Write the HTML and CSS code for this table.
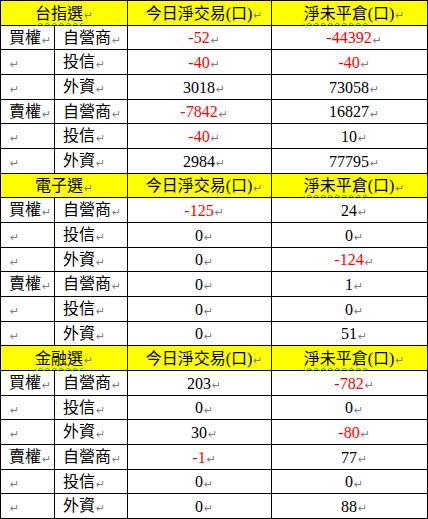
FILE: index.html
```html
<!DOCTYPE html>
<html lang="zh-Hant">
<head>
<meta charset="utf-8">
<title>選擇權三大法人</title>
<link rel="stylesheet" href="styles.css">
</head>
<body>
<div class="tbl">
  <div class="c hd span2"><span class="t"><span class="wavy">台指選</span></span><span class="pm">↵</span></div>
  <div class="c hd num"><span class="t">今日淨交易(口)</span><span class="pm z">↵</span></div>
  <div class="c hd num"><span class="t"><span class="wavy">淨未平倉</span>(口)</span><span class="pm z">↵</span></div>

  <div class="c lb">買權<span class="pm">↵</span></div><div class="c lb">自營商<span class="pm">↵</span></div>
  <div class="c num"><span class="t red">-52</span><span class="pm z">↵</span></div><div class="c num"><span class="t red">-44392</span><span class="pm z">↵</span></div>
  <div class="c lb"><span class="pm">↵</span></div><div class="c lb">投信<span class="pm">↵</span></div>
  <div class="c num"><span class="t red">-40</span><span class="pm z">↵</span></div><div class="c num"><span class="t red">-40</span><span class="pm z">↵</span></div>
  <div class="c lb"><span class="pm">↵</span></div><div class="c lb">外資<span class="pm">↵</span></div>
  <div class="c num"><span class="t">3018</span><span class="pm z">↵</span></div><div class="c num"><span class="t">73058</span><span class="pm z">↵</span></div>
  <div class="c lb">賣權<span class="pm">↵</span></div><div class="c lb">自營商<span class="pm">↵</span></div>
  <div class="c num"><span class="t red">-7842</span><span class="pm z">↵</span></div><div class="c num"><span class="t">16827</span><span class="pm z">↵</span></div>
  <div class="c lb"><span class="pm">↵</span></div><div class="c lb">投信<span class="pm">↵</span></div>
  <div class="c num"><span class="t red">-40</span><span class="pm z">↵</span></div><div class="c num"><span class="t">10</span><span class="pm z">↵</span></div>
  <div class="c lb"><span class="pm">↵</span></div><div class="c lb">外資<span class="pm">↵</span></div>
  <div class="c num"><span class="t">2984</span><span class="pm z">↵</span></div><div class="c num"><span class="t">77795</span><span class="pm z">↵</span></div>

  <div class="c hd span2"><span class="t">電子選</span><span class="pm">↵</span></div>
  <div class="c hd num"><span class="t">今日淨交易(口)</span><span class="pm z">↵</span></div>
  <div class="c hd num"><span class="t"><span class="wavy">淨未平倉</span>(口)</span><span class="pm z">↵</span></div>

  <div class="c lb">買權<span class="pm">↵</span></div><div class="c lb">自營商<span class="pm">↵</span></div>
  <div class="c num"><span class="t red">-125</span><span class="pm z">↵</span></div><div class="c num"><span class="t">24</span><span class="pm z">↵</span></div>
  <div class="c lb"><span class="pm">↵</span></div><div class="c lb">投信<span class="pm">↵</span></div>
  <div class="c num"><span class="t">0</span><span class="pm z">↵</span></div><div class="c num"><span class="t">0</span><span class="pm z">↵</span></div>
  <div class="c lb"><span class="pm">↵</span></div><div class="c lb">外資<span class="pm">↵</span></div>
  <div class="c num"><span class="t">0</span><span class="pm z">↵</span></div><div class="c num"><span class="t red">-124</span><span class="pm z">↵</span></div>
  <div class="c lb">賣權<span class="pm">↵</span></div><div class="c lb">自營商<span class="pm">↵</span></div>
  <div class="c num"><span class="t">0</span><span class="pm z">↵</span></div><div class="c num"><span class="t">1</span><span class="pm z">↵</span></div>
  <div class="c lb"><span class="pm">↵</span></div><div class="c lb">投信<span class="pm">↵</span></div>
  <div class="c num"><span class="t">0</span><span class="pm z">↵</span></div><div class="c num"><span class="t">0</span><span class="pm z">↵</span></div>
  <div class="c lb"><span class="pm">↵</span></div><div class="c lb">外資<span class="pm">↵</span></div>
  <div class="c num"><span class="t">0</span><span class="pm z">↵</span></div><div class="c num"><span class="t">51</span><span class="pm z">↵</span></div>

  <div class="c hd span2"><span class="t"><span class="wavy">金融選</span></span><span class="pm">↵</span></div>
  <div class="c hd num"><span class="t">今日淨交易(口)</span><span class="pm z">↵</span></div>
  <div class="c hd num"><span class="t"><span class="wavy">淨未平倉</span>(口)</span><span class="pm z">↵</span></div>

  <div class="c lb">買權<span class="pm">↵</span></div><div class="c lb">自營商<span class="pm">↵</span></div>
  <div class="c num"><span class="t">203</span><span class="pm z">↵</span></div><div class="c num"><span class="t red">-782</span><span class="pm z">↵</span></div>
  <div class="c lb"><span class="pm">↵</span></div><div class="c lb">投信<span class="pm">↵</span></div>
  <div class="c num"><span class="t">0</span><span class="pm z">↵</span></div><div class="c num"><span class="t">0</span><span class="pm z">↵</span></div>
  <div class="c lb"><span class="pm">↵</span></div><div class="c lb">外資<span class="pm">↵</span></div>
  <div class="c num"><span class="t">30</span><span class="pm z">↵</span></div><div class="c num"><span class="t red">-80</span><span class="pm z">↵</span></div>
  <div class="c lb">賣權<span class="pm">↵</span></div><div class="c lb">自營商<span class="pm">↵</span></div>
  <div class="c num"><span class="t red">-1</span><span class="pm z">↵</span></div><div class="c num"><span class="t">77</span><span class="pm z">↵</span></div>
  <div class="c lb"><span class="pm">↵</span></div><div class="c lb">投信<span class="pm">↵</span></div>
  <div class="c num"><span class="t">0</span><span class="pm z">↵</span></div><div class="c num"><span class="t">0</span><span class="pm z">↵</span></div>
  <div class="c lb"><span class="pm">↵</span></div><div class="c lb">外資<span class="pm">↵</span></div>
  <div class="c num"><span class="t">0</span><span class="pm z">↵</span></div><div class="c num"><span class="t">88</span><span class="pm z">↵</span></div>
</div>
</body>
</html>
```
FILE: styles.css
```css
html, body {
  margin: 0;
  padding: 0;
  background: #ffffff;
}

.tbl {
  display: grid;
  grid-template-columns: 53px 72px 143px 155px;
  grid-template-rows: repeat(7, 24px 23px 24px);
  gap: 1px;
  padding: 1px;
  background: #000000;
  width: max-content;
  font-family: "Liberation Serif", "Noto Sans CJK TC", serif;
  font-size: 16px;
  color: #000000;
}

.c {
  background: #ffffff;
  display: flex;
  align-items: center;
  white-space: nowrap;
  line-height: 20px;
  overflow: visible;
}

.t {
  padding-top: 1px;
}

.lb {
  padding-left: 8px;
}

.num {
  justify-content: center;
}

.hd {
  background: #ffff00;
  justify-content: center;
}

.span2 {
  grid-column: span 2;
}

.red {
  color: #ff0000;
}

.wavy {
  text-decoration: underline wavy #2fa82f;
  text-decoration-thickness: 1px;
  text-underline-offset: 3px;
}

.pm {
  font-family: "DejaVu Sans", sans-serif;
  font-size: 11px;
  color: #808080;
  align-self: center;
  padding-top: 5px;
  padding-left: 1px;
  line-height: 11px;
}

.z {
  width: 0;
  overflow: visible;
}
```
